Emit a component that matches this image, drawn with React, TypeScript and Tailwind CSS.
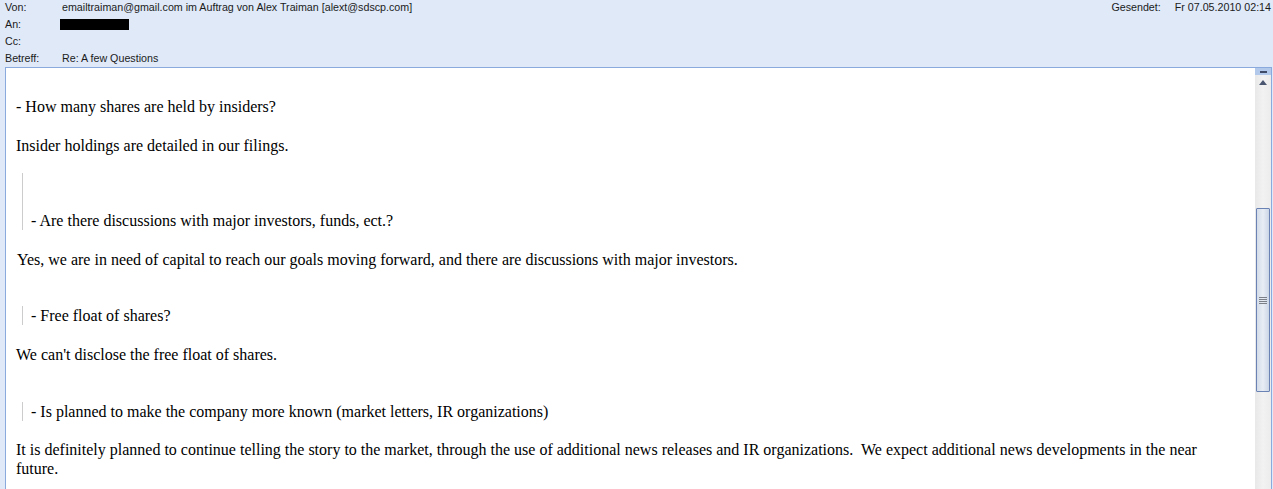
import React from "react";

const hdr = "font-['Liberation_Sans',Tahoma,sans-serif] text-[10.7px] text-[#1b1b1b]";
const serif = "font-['Liberation_Serif','Times_New_Roman',serif] text-[16px] leading-[19px] text-black";

function Row({ label, children }: { label: string; children?: React.ReactNode }) {
  return (
    <div className="flex h-[17px] items-center">
      <div className="w-[57px] shrink-0">{label}</div>
      <div className="flex items-center">{children}</div>
    </div>
  );
}

function Quote({ children, blank = 0 }: { children: React.ReactNode; blank?: number }) {
  return (
    <div className="ml-[6px] border-l border-[#cccccc] pl-[8px]">
      {Array.from({ length: blank }).map((_, i) => (
        <div key={i} className="h-[19px]" />
      ))}
      <div>{children}</div>
    </div>
  );
}

function Scrollbar() {
  return (
    <div className="flex w-[16px] shrink-0 flex-col bg-gradient-to-r from-[#e8e8e8] via-[#f2f2f2] to-[#ececec]">
      <div className="flex h-[7px] items-center justify-center bg-[#b2c9ec]">
        <div className="h-[2px] w-[7px] bg-[#3f4a66]" />
      </div>
      <div className="flex h-[14px] items-center justify-center">
        <svg width="8" height="5" viewBox="0 0 8 5">
          <path d="M4 0 L8 5 L0 5 Z" fill="#4b5671" />
        </svg>
      </div>
      <div className="h-[119px]" />
      <div className="mx-[1px] flex h-[184px] items-center justify-center rounded-[1px] border border-[#6b82b4] bg-gradient-to-r from-[#d3dce9] via-[#e9eef5] to-[#cbd6e6]">
        <div className="flex flex-col gap-[1px]">
          <div className="h-px w-[8px] bg-[#7a7f88]" />
          <div className="h-px w-[8px] bg-[#7a7f88]" />
          <div className="h-px w-[8px] bg-[#7a7f88]" />
          <div className="h-px w-[8px] bg-[#7a7f88]" />
        </div>
      </div>
      <div className="flex-1" />
    </div>
  );
}

export default function App() {
  return (
    <div className="flex h-[489px] w-[1273px] flex-col overflow-hidden bg-[#dfe9f8]">
      <div className={`${hdr} flex h-[67px] shrink-0 justify-between pl-[5px] pr-[2px]`}>
        <div className="-mt-[1px]">
          <Row label="Von:">emailtraiman@gmail.com im Auftrag von Alex Traiman [alext@sdscp.com]</Row>
          <Row label="An:">
            <div className="-ml-[2px] h-[11px] w-[69px] bg-black" />
          </Row>
          <Row label="Cc:" />
          <Row label="Betreff:">Re: A few Questions</Row>
        </div>
        <div className="-mt-[1px] flex h-[17px] items-center">
          <span className="mr-[14px]">Gesendet:</span>
          <span>Fr 07.05.2010 02:14</span>
        </div>
      </div>
      <div className="ml-[5px] mr-[1px] flex min-h-0 flex-1 border-l border-r border-t border-[#8aa9dc] bg-white">
        <div className={`${serif} flex-1 pl-[10px] pr-[16px] pt-[29px]`}>
          <div>- How many shares are held by insiders?</div>
          <div className="mt-[20px]">Insider holdings are detailed in our filings.</div>
          <div className="mt-[18px]">
            <Quote blank={2}>- Are there discussions with major investors, funds, ect.?</Quote>
          </div>
          <div className="mt-[20px] pl-[1px]">
            Yes, we are in need of capital to reach our goals moving forward, and there are discussions with major investors.
          </div>
          <div className="mt-[37px]">
            <Quote>- Free float of shares?</Quote>
          </div>
          <div className="mt-[20px]">We can't disclose the free float of shares.</div>
          <div className="mt-[38px]">
            <Quote>- Is planned to make the company more known (market letters, IR organizations)</Quote>
          </div>
          <div className="mt-[19px]">
            It is definitely planned to continue telling the story to the market, through the use of additional news releases and IR organizations.&nbsp; We expect additional news developments in the near future.
          </div>
        </div>
        <Scrollbar />
      </div>
    </div>
  );
}
